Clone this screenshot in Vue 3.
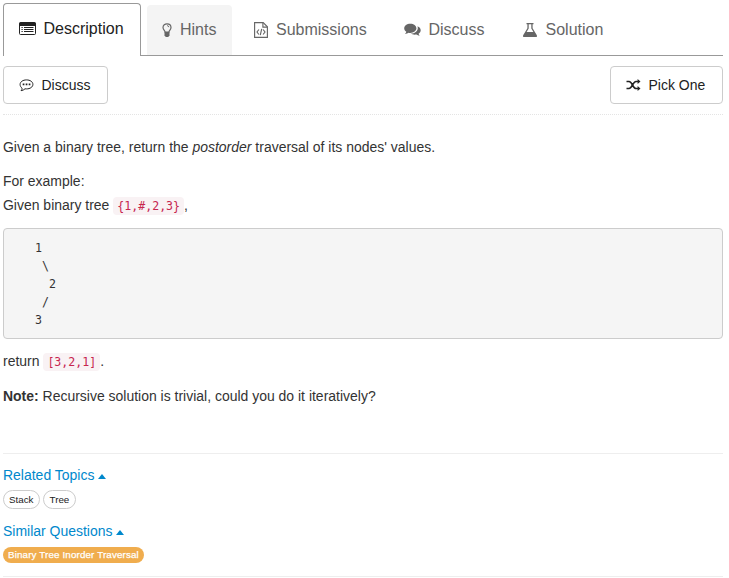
<script setup>
const tree = '   1\n    \\\n     2\n    /\n   3'
const topics = ['Stack', 'Tree']
const similar = ['Binary Tree Inorder Traversal']
</script>

<template>
  <main class="page">
    <nav class="tabs">
      <a class="tab active">
        <svg viewBox="0 0 17 14" width="17" height="14">
          <path fill="currentColor" d="M1.500 0h14A1.500 1.500 0 0 1 17 1.500V4H0V1.500A1.500 1.500 0 0 1 1.500 0z" />
          <path fill="none" stroke="currentColor" d="M.500 3v8.500q0 1 1 1h14q1 0 1-1V3" />
          <path fill="currentColor" d="M2.500 5h1.200v1H2.500zM5 5h9.500v1H5zM2.500 7h1.200v1H2.500zM5 7h9.500v1H5zM2.500 9h1.200v1H2.500zM5 9h9.500v1H5z" />
        </svg>
        <span>Description</span>
      </a>
      <a class="tab hints">
        <svg viewBox="0 0 10 15" width="10" height="15">
          <path d="M3.200 9.200C3.100 7.700 1 6.700 1 4.500C1 2.200 2.900.800 5 .800s4 1.400 4 3.700c0 2.200-2.100 3.200-2.200 4.700z" fill="none" stroke="currentColor" stroke-width="1.200" />
          <path d="M5 2.600q1.700 0 1.900 1.600" fill="none" stroke="currentColor" stroke-width=".9" />
          <path d="M2.500 9h5v3.500L6.200 14H3.800L2.500 12.500z" fill="currentColor" />
        </svg>
        <span>Hints</span>
      </a>
      <a class="tab submissions">
        <svg viewBox="0 0 14 16" width="14" height="16">
          <g fill="none" stroke="currentColor" stroke-width="1.150">
            <path d="M.600.600h8.600l4.200 4.200v10.600H.600z" />
            <path d="M8.900.800v4.300h4.300" />
            <path d="M4.900 7.500L3 10l1.900 2.500M9.100 7.500L11 10l-1.900 2.500M7.700 6.800l-1.400 6.400" />
          </g>
        </svg>
        <span>Submissions</span>
      </a>
      <a class="tab discuss">
        <svg viewBox="0 0 17 14" width="17" height="14">
          <path fill="currentColor" d="M6.300.700c3.400 0 6.100 2 6.100 4.600s-2.700 4.600-6.100 4.600c-.6 0-1.200-.1-1.800-.2-1 .7-2 1.100-3.500 1.200.8-.7 1.200-1.300 1.300-2.100C.900 7.900.200 6.700.200 5.300.200 2.700 2.900.700 6.300.700z" />
          <path fill="currentColor" d="M13.500 3.300c1.900.8 3.200 2.200 3.200 3.900 0 1.400-.8 2.600-2.100 3.500.1.800.5 1.400 1.200 2-1.400-.1-2.500-.5-3.400-1.200-2.200.4-4.300 0-5.800-.9 3.900.1 7.200-2.200 7.200-5.300 0-.7-.1-1.400-.3-2z" />
        </svg>
        <span>Discuss</span>
      </a>
      <a class="tab solution">
        <svg viewBox="0 0 14 14" width="14" height="14">
          <path fill="currentColor" fill-rule="evenodd" d="M3.500 0h7v1.300h-.9v3.900l4.100 6.900q.9 1.900-1 1.900H1.300q-1.900 0-1-1.900l4.100-6.900V1.300h-.9zM5.700 1.300v4.200L3.600 9h6.800L8.300 5.500V1.300z" />
        </svg>
        <span>Solution</span>
      </a>
    </nav>

    <div class="toolbar">
      <button class="btn">
        <svg viewBox="0 0 15 13" width="15" height="13">
          <path d="M7.500.900c3.600 0 6.400 1.900 6.400 4.500s-2.800 4.500-6.400 4.500c-.5 0-1-.1-1.500-.1-1 1-2.200 1.600-3.900 1.900.6-.7 1-1.500 1-2.500C1.800 8.300 1.100 6.900 1.100 5.400 1.100 2.800 3.900.900 7.500.900z" fill="none" stroke="currentColor" stroke-width="1" />
          <path d="M3.700 4.600h1.700v1.700H3.700zM6.700 4.600h1.700v1.700H6.700zM9.700 4.600h1.700v1.700H9.700z" fill="currentColor" />
        </svg>
        <span>Discuss</span>
      </button>
      <button class="btn pick">
        <svg viewBox="0 0 15 12" width="15" height="12">
          <path d="M.500 2.500h2.500c3.300 0 3.800 7 7 7H12M.500 9.500h2.500c3.300 0 3.800-7 7-7H12" fill="none" stroke="currentColor" stroke-width="1.700" />
          <path d="M11.600 0l2.900 2.500-2.900 2.500zM11.600 7l2.900 2.500-2.900 2.500z" fill="currentColor" />
        </svg>
        <span>Pick One</span>
      </button>
    </div>

    <article class="question">
      <p>Given a binary tree, return the <i>postorder</i> traversal of its nodes' values.</p>
      <p>For example:<br />Given binary tree <code>{1,#,2,3}</code>,</p>
      <pre>{{ tree }}</pre>
      <p class="result">return <code>[3,2,1]</code>.</p>
      <p><b>Note:</b> Recursive solution is trivial, could you do it iteratively?</p>
    </article>

    <section class="related">
      <a class="heading"><span>Related Topics</span><i class="caret"></i></a>
      <div class="tags">
        <span v-for="t in topics" :key="t" class="tag">{{ t }}</span>
      </div>
      <a class="heading second"><span>Similar Questions</span><i class="caret"></i></a>
      <div class="tags">
        <span v-for="s in similar" :key="s" class="badge">{{ s }}</span>
      </div>
    </section>
  </main>
</template>

<style>
body { background: #fff; }
</style>

<style scoped>
.page {
  box-sizing: border-box;
  width: 726px;
  padding: 3px 3px 0;
  font: 13.97px/24px "Liberation Sans", Arial, sans-serif;
  color: #333;
}
svg { display: block; flex: none; }
.tabs {
  display: flex;
  align-items: flex-end;
  height: 53px;
  box-sizing: border-box;
  border-bottom: 1px solid #999;
  font-size: 16px;
  color: #666;
}
.tab {
  display: flex;
  align-items: center;
  box-sizing: border-box;
  height: 50px;
  padding: 0 15px;
  border-radius: 4px 4px 0 0;
  white-space: nowrap;
}
.tab.active {
  width: 138px;
  height: 53px;
  margin: 0 6px -1px 0;
  padding: 0 0 2px 15px;
  gap: 7.5px;
  border: 1px solid #999;
  border-bottom: 0;
  background: #fff;
  color: #222;
}
.tab.hints { width: 85px; gap: 8px; background: #f4f4f4; }
.tab.submissions { width: 150px; margin-left: 7px; gap: 8px; }
.tab.discuss { gap: 7.5px; width: 119px; }
.tab.solution { gap: 8.5px; }
.toolbar {
  display: flex;
  justify-content: space-between;
  padding: 10px 0;
  border-bottom: 1px dotted #e4e4e4;
}
.btn {
  display: flex;
  align-items: center;
  gap: 7.5px;
  box-sizing: border-box;
  width: 105px;
  height: 38px;
  padding: 0 0 0 15px;
  border: 1px solid #ccc;
  border-radius: 4px;
  background: #fff;
  color: #222;
  font: inherit;
  white-space: nowrap;
}
.btn.pick { width: 113px; }
.question { padding-top: 20px; height: 318px; }
p { margin: 0 0 10px; }
p + pre { margin-top: 11px; }
code {
  padding: 2px 4px;
  border-radius: 4px;
  background: #f9f2f4;
  color: #c7254e;
  font: 11.6px/1.2 "DejaVu Sans Mono", monospace;
}
pre {
  box-sizing: border-box;
  height: 111px;
  margin: 0 0 10px;
  padding: 10px;
  border: 1px solid #ccc;
  border-radius: 4px;
  background: #f5f5f5;
  font: 11.6px/18px "DejaVu Sans Mono", monospace;
}
.result { margin-bottom: 11px; }
.related {
  box-sizing: border-box;
  height: 124px;
  padding-top: 11px;
  border-top: 1px solid #eee;
  border-bottom: 1px solid #eee;
}
.heading {
  display: flex;
  align-items: center;
  gap: 4px;
  height: 20px;
  color: #0088cc;
}
.heading.second { margin-top: 12px; }
.caret {
  margin-top: 2px;
  border: 4.5px solid transparent;
  border-top: 0;
  border-bottom: 5px solid #0088cc;
}
.tags { display: flex; gap: 3px; padding-top: 5px; }
.tag {
  box-sizing: border-box;
  height: 19px;
  padding: 0 5px;
  border: 1px solid #ccc;
  border-radius: 10px;
  color: #222;
  font-size: 9.8px;
  line-height: 17px;
}
.tag + .tag { padding: 0 6px; }
.badge {
  height: 16px;
  margin-top: 1px;
  padding: 0 5px;
  border-radius: 8px;
  background: #f0ad4e;
  color: #fff;
  font-size: 9.8px;
  line-height: 16px;
  letter-spacing: .14px;
  -webkit-text-stroke: .25px #fff;
}
</style>
